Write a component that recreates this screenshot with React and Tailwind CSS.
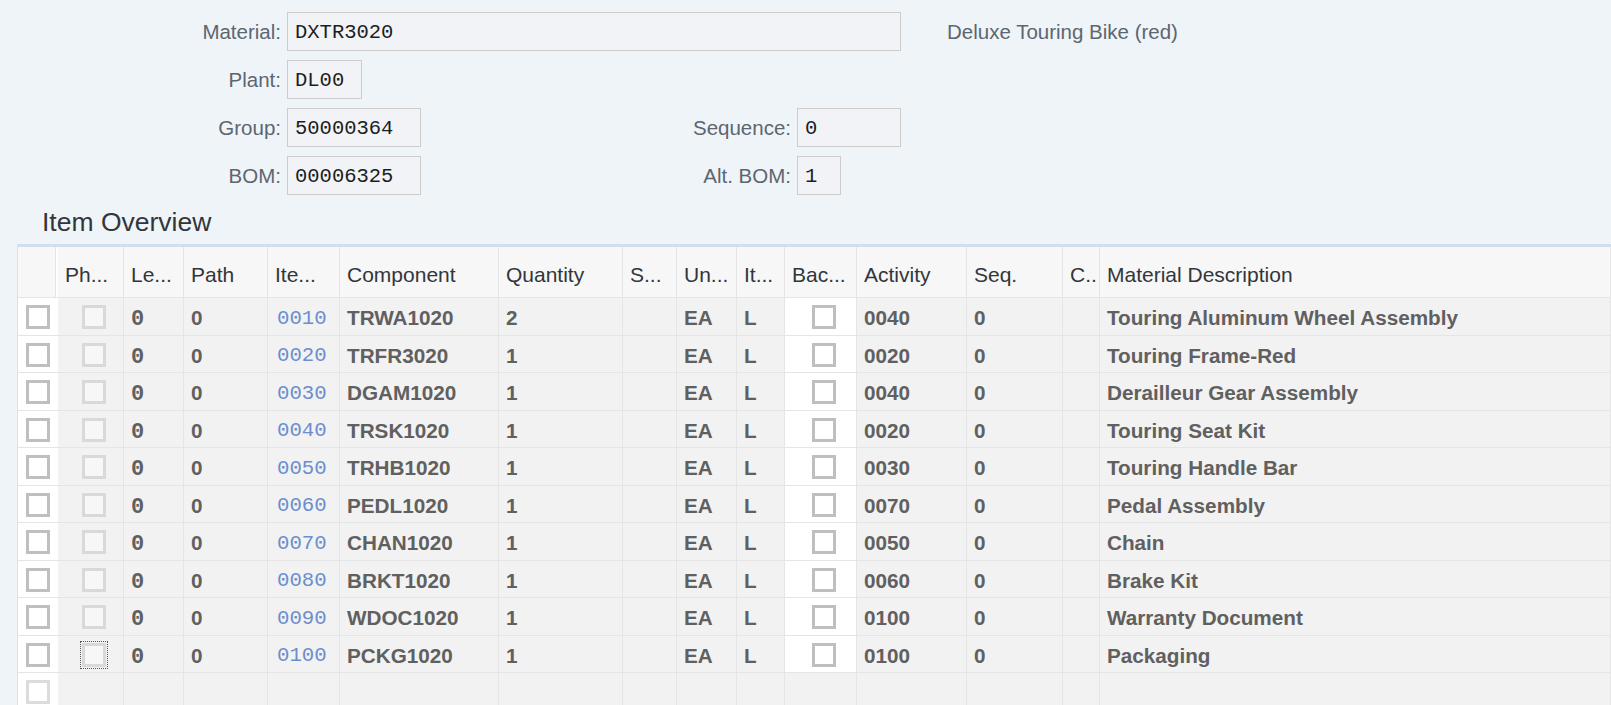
import React from "react";

const cols = [
  { key: "ph", label: "Ph...", w: "w-[66px]" },
  { key: "le", label: "Le...", w: "w-[60px]" },
  { key: "path", label: "Path", w: "w-[84px]" },
  { key: "item", label: "Ite...", w: "w-[72px]" },
  { key: "comp", label: "Component", w: "w-[159px]" },
  { key: "qty", label: "Quantity", w: "w-[124px]" },
  { key: "s", label: "S...", w: "w-[54px]" },
  { key: "un", label: "Un...", w: "w-[60px]" },
  { key: "it", label: "It...", w: "w-[48px]" },
  { key: "bac", label: "Bac...", w: "w-[72px]" },
  { key: "act", label: "Activity", w: "w-[110px]" },
  { key: "seq", label: "Seq.", w: "w-[96px]" },
  { key: "c", label: "C..", w: "w-[37px]" },
  { key: "desc", label: "Material Description", w: "flex-1" },
];

const rows = [
  ["0010", "TRWA1020", "2", "0040", "Touring Aluminum Wheel Assembly"],
  ["0020", "TRFR3020", "1", "0020", "Touring Frame-Red"],
  ["0030", "DGAM1020", "1", "0040", "Derailleur Gear Assembly"],
  ["0040", "TRSK1020", "1", "0020", "Touring Seat Kit"],
  ["0050", "TRHB1020", "1", "0030", "Touring Handle Bar"],
  ["0060", "PEDL1020", "1", "0070", "Pedal Assembly"],
  ["0070", "CHAN1020", "1", "0050", "Chain"],
  ["0080", "BRKT1020", "1", "0060", "Brake Kit"],
  ["0090", "WDOC1020", "1", "0100", "Warranty Document"],
  ["0100", "PCKG1020", "1", "0100", "Packaging"],
];

const sans = "font-['Liberation_Sans',Arial,sans-serif]";
const mono = "font-['Liberation_Mono','Courier_New',monospace]";

function Field({ value, w }) {
  return (
    <div
      className={`${w} h-[39px] shrink-0 flex items-center pl-[7px] pt-[3px] border border-[#cccccc] bg-[#f1f3f6] text-[20.5px] text-[#1d1d1d] ${mono}`}
    >
      {value}
    </div>
  );
}

function Label({ text, w }) {
  return (
    <div className={`${w} shrink-0 text-right pr-[6px] pt-[2px] text-[20.5px] text-[#5c6670]`}>
      {text}
    </div>
  );
}

function Box({ kind = "normal", focus = false }) {
  const cls =
    kind === "disabled"
      ? "border-[#d9d9d9] bg-[#f7f7f7]"
      : kind === "light"
      ? "border-[#dcdcdc] bg-white"
      : "border-[#bfbfbf] bg-white";
  return (
    <div
      className={`w-[24px] h-[24px] mt-[2px] border-[3px] ${cls} ${
        focus ? "outline-1 outline-dotted outline-[#555555] outline-offset-[1px]" : ""
      }`}
    />
  );
}

function Cell({ w, children, className = "" }) {
  return (
    <div
      className={`${w} shrink-0 h-full flex items-center pl-[7px] border-r border-[#e5e5e5] overflow-hidden whitespace-nowrap ${className}`}
    >
      {children}
    </div>
  );
}

export default function App() {
  return (
    <div className={`h-screen w-full overflow-hidden bg-[#eff4f9] ${sans}`}>
      {/* header form */}
      <div className="pt-[12px] flex flex-col gap-[9px]">
        <div className="h-[39px] flex items-center">
          <Label text="Material:" w="w-[287px]" />
          <Field value="DXTR3020" w="w-[614px]" />
          <div className="ml-[46px] pt-[2px] text-[20.5px] text-[#5c6670]">Deluxe Touring Bike (red)</div>
        </div>
        <div className="h-[39px] flex items-center">
          <Label text="Plant:" w="w-[287px]" />
          <Field value="DL00" w="w-[75px]" />
        </div>
        <div className="h-[39px] flex items-center">
          <Label text="Group:" w="w-[287px]" />
          <Field value="50000364" w="w-[134px]" />
          <Label text="Sequence:" w="w-[376px]" />
          <Field value="0" w="w-[104px]" />
        </div>
        <div className="h-[39px] flex items-center">
          <Label text="BOM:" w="w-[287px]" />
          <Field value="00006325" w="w-[134px]" />
          <Label text="Alt. BOM:" w="w-[376px]" />
          <Field value="1" w="w-[44px]" />
        </div>
      </div>

      <div className="pl-[42px] pt-[12px] pb-[7px] text-[26.5px] leading-[30px] text-[#32363a]">
        Item Overview
      </div>

      {/* table */}
      <div className="ml-[17px] border-t-[3px] border-[#d1deec] border-l border-l-[#e0e0e0]">
        {/* header row */}
        <div className="h-[51px] flex bg-[#f7f7f7] border-b border-[#e5e5e5] text-[21px] text-[#32363a]">
          <div className="w-[38px] shrink-0 border-r border-[#e5e5e5]" />
          <div className="w-[2px] shrink-0 bg-white" />
          {cols.map((c) => (
            <Cell key={c.key} w={c.w} className="pt-[5px]">
              {c.label}
            </Cell>
          ))}
        </div>

        {rows.map((r, i) => (
          <div
            key={r[0]}
            className="h-[37.5px] flex bg-[#f2f2f2] border-b border-[#e5e5e5] text-[20.7px] font-bold text-[#606060]"
          >
            <div className="w-[40px] shrink-0 h-full bg-white flex items-center pl-[8px]">
              <Box />
            </div>
            <Cell w="w-[66px]" className="justify-center pl-0">
              <Box kind="disabled" focus={i === rows.length - 1} />
            </Cell>
            <Cell w="w-[60px]" className={`${mono} text-[22px] pt-[7px] pl-[6px]`}>
              0
            </Cell>
            <Cell w="w-[84px]" className="pt-[3px]">0</Cell>
            <Cell w="w-[72px]" className={`${mono} font-normal text-[#6b8ecf] pt-[4px] pl-[9px]`}>
              {r[0]}
            </Cell>
            <Cell w="w-[159px]" className="pt-[3px]">{r[1]}</Cell>
            <Cell w="w-[124px]" className="pt-[3px]">{r[2]}</Cell>
            <Cell w="w-[54px]" />
            <Cell w="w-[60px]" className="pt-[3px]">EA</Cell>
            <Cell w="w-[48px]" className="pt-[3px]">L</Cell>
            <Cell w="w-[72px]" className="justify-center pl-0 bg-white">
              <Box />
            </Cell>
            <Cell w="w-[110px]" className="pt-[3px]">{r[3]}</Cell>
            <Cell w="w-[96px]" className="pt-[3px]">0</Cell>
            <Cell w="w-[37px]" />
            <Cell w="flex-1" className="pt-[3px]">{r[4]}</Cell>
          </div>
        ))}

        {/* empty row */}
        <div className="h-[37.5px] flex bg-[#f2f2f2] border-b border-[#e5e5e5]">
          <div className="w-[40px] shrink-0 h-full bg-white flex items-center pl-[8px]">
            <Box kind="light" />
          </div>
          {cols.map((c) => (
            <Cell key={c.key} w={c.w} />
          ))}
        </div>
      </div>
    </div>
  );
}
